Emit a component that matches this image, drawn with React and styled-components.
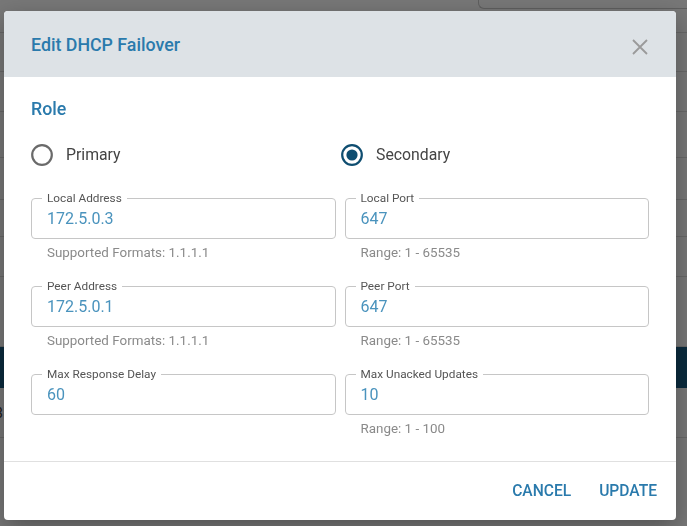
import React from "react";
import styled, { createGlobalStyle } from "styled-components";

const GlobalStyle = createGlobalStyle`
  html, body { margin: 0; padding: 0; }
  body { font-family: Roboto, "Liberation Sans", Arial, sans-serif; background: #eeeeee; }
  * { box-sizing: border-box; }
`;

/* ---------- page behind the dialog ---------- */
const Page = styled.div`
  width: 687px;
  height: 526px;
  overflow: hidden;
  background: #eeeeee;
  display: flex;
  flex-direction: column;
`;

const PageRow = styled.div`
  flex: 0 0 ${(p) => p.$h}px;
  border-bottom: 1px solid ${(p) => (p.$dark ? "#15557b" : "#cfcfcf")};
  background: ${(p) => (p.$dark ? "#15557b" : "transparent")};
  display: flex;
  align-items: center;
  font-size: 14px;
  color: #333;
`;

const SearchBox = styled.div`
  margin-left: 478px;
  align-self: flex-start;
  flex: 1;
  height: 9px;
  border-left: 1px solid #bdbdbd;
  border-bottom: 1px solid #bdbdbd;
  border-bottom-left-radius: 6px;
`;

const CutText = styled.span`
  margin-left: -5px;
`;

/* ---------- dialog ---------- */
const Overlay = styled.div`
  position: fixed;
  inset: 0;
  background: rgba(0, 0, 0, 0.5);
  display: flex;
  align-items: flex-start;
  padding: 11px 0 0 4px;
`;

const Dialog = styled.div`
  width: 672px;
  height: 509px;
  background: #ffffff;
  border-radius: 4px;
  overflow: hidden;
  box-shadow: 0 8px 24px rgba(0, 0, 0, 0.3);
  display: flex;
  flex-direction: column;
`;

const Header = styled.div`
  height: 66px;
  flex: 0 0 66px;
  background: #dde2e6;
  display: flex;
  align-items: center;
  justify-content: space-between;
  padding: 0 28px 0 27px;
`;

const Title = styled.h2`
  margin: 0;
  font-size: 17.8px;
  line-height: 21px;
  font-weight: 500;
  color: #2a7aac;
`;

const CloseButton = styled.button`
  border: none;
  background: transparent;
  padding: 0;
  margin-top: 6px;
  width: 16px;
  height: 16px;
  display: flex;
  cursor: pointer;
`;

const Body = styled.div`
  padding: 21px 27px 24px;
  flex: 1;
  border-bottom: 1px solid #e0e0e0;
`;

const SectionTitle = styled.div`
  font-size: 17.8px;
  line-height: 21px;
  font-weight: 500;
  color: #2a7aac;
`;

const RadioRow = styled.div`
  margin-top: 24px;
  height: 24px;
  display: grid;
  grid-template-columns: 310px 1fr;
  align-items: center;
`;

const RadioLabel = styled.label`
  display: flex;
  align-items: center;
  gap: 13px;
  font-size: 15.8px;
  line-height: 24px;
  color: #444444;
  cursor: pointer;
`;

const FieldGrid = styled.div`
  margin-top: 24px;
  display: grid;
  grid-template-columns: 1fr 1fr;
  column-gap: 9px;
  row-gap: 18px;
  align-items: start;
`;

const Field = styled.div`
  display: flex;
  flex-direction: column;
`;

const Box = styled.fieldset`
  margin: 0;
  padding: 0 10px 7px;
  border: 1px solid #c6c6c6;
  border-radius: 4px;
  min-width: 0;
`;

const Legend = styled.legend`
  padding: 0 5px;
  font-size: 11.8px;
  line-height: 14px;
  color: #555555;
`;

const Input = styled.input`
  display: block;
  width: 100%;
  height: 26px;
  border: none;
  outline: none;
  background: transparent;
  padding: 0 5px;
  font-family: Roboto, "Liberation Sans", Arial, sans-serif;
  font-size: 16px;
  color: #4a93bd;
`;

const Helper = styled.div`
  margin: 6px 0 0 16px;
  font-size: 13.4px;
  line-height: 16px;
  color: #8a8a8a;
`;

const Footer = styled.div`
  flex: 0 0 58px;
  display: flex;
  align-items: center;
  justify-content: flex-end;
  gap: 12px;
  padding: 0 11px;
`;

const TextButton = styled.button`
  border: none;
  background: transparent;
  padding: 6px 8px;
  font-family: Roboto, "Liberation Sans", Arial, sans-serif;
  font-size: 15.6px;
  line-height: 20px;
  font-weight: 500;
  color: #2a7aac;
  text-transform: uppercase;
  cursor: pointer;
`;

const RadioIcon = ({ checked }) => (
  <svg width="22" height="22" viewBox="0 0 22 22">
    <circle
      cx="11"
      cy="11"
      r="9.8"
      fill="none"
      stroke={checked ? "#0e4d70" : "#6a6a6a"}
      strokeWidth="2.2"
    />
    {checked && <circle cx="11" cy="11" r="5.6" fill="#0e4d70" />}
  </svg>
);

const CloseIcon = () => (
  <svg width="16" height="16" viewBox="0 0 16 16">
    <path d="M1 1 L15 15 M15 1 L1 15" stroke="#9a9a9a" strokeWidth="1.8" fill="none" />
  </svg>
);

const fields = [
  { label: "Local Address", value: "172.5.0.3", helper: "Supported Formats: 1.1.1.1" },
  { label: "Local Port", value: "647", helper: "Range: 1 - 65535" },
  { label: "Peer Address", value: "172.5.0.1", helper: "Supported Formats: 1.1.1.1" },
  { label: "Peer Port", value: "647", helper: "Range: 1 - 65535" },
  { label: "Max Response Delay", value: "60" },
  { label: "Max Unacked Updates", value: "10", helper: "Range: 1 - 100" },
];

const rows = [33, 39, 40, 46, 42, 37, 40, 70];

export default function App() {
  return (
    <>
      <GlobalStyle />
      <Page>
        <PageRow $h={33}>
          <SearchBox />
        </PageRow>
        {rows.slice(1).map((h, i) => (
          <PageRow key={i} $h={h} />
        ))}
        <PageRow $h={41} $dark />
        <PageRow $h={50}>
          <CutText>3</CutText>
        </PageRow>
      </Page>
      <Overlay>
        <Dialog>
          <Header>
            <Title>Edit DHCP Failover</Title>
            <CloseButton aria-label="close">
              <CloseIcon />
            </CloseButton>
          </Header>
          <Body>
            <SectionTitle>Role</SectionTitle>
            <RadioRow>
              <RadioLabel>
                <RadioIcon />
                Primary
              </RadioLabel>
              <RadioLabel>
                <RadioIcon checked />
                Secondary
              </RadioLabel>
            </RadioRow>
            <FieldGrid>
              {fields.map((f) => (
                <Field key={f.label}>
                  <Box>
                    <Legend>{f.label}</Legend>
                    <Input defaultValue={f.value} />
                  </Box>
                  {f.helper && <Helper>{f.helper}</Helper>}
                </Field>
              ))}
            </FieldGrid>
          </Body>
          <Footer>
            <TextButton>Cancel</TextButton>
            <TextButton>Update</TextButton>
          </Footer>
        </Dialog>
      </Overlay>
    </>
  );
}
